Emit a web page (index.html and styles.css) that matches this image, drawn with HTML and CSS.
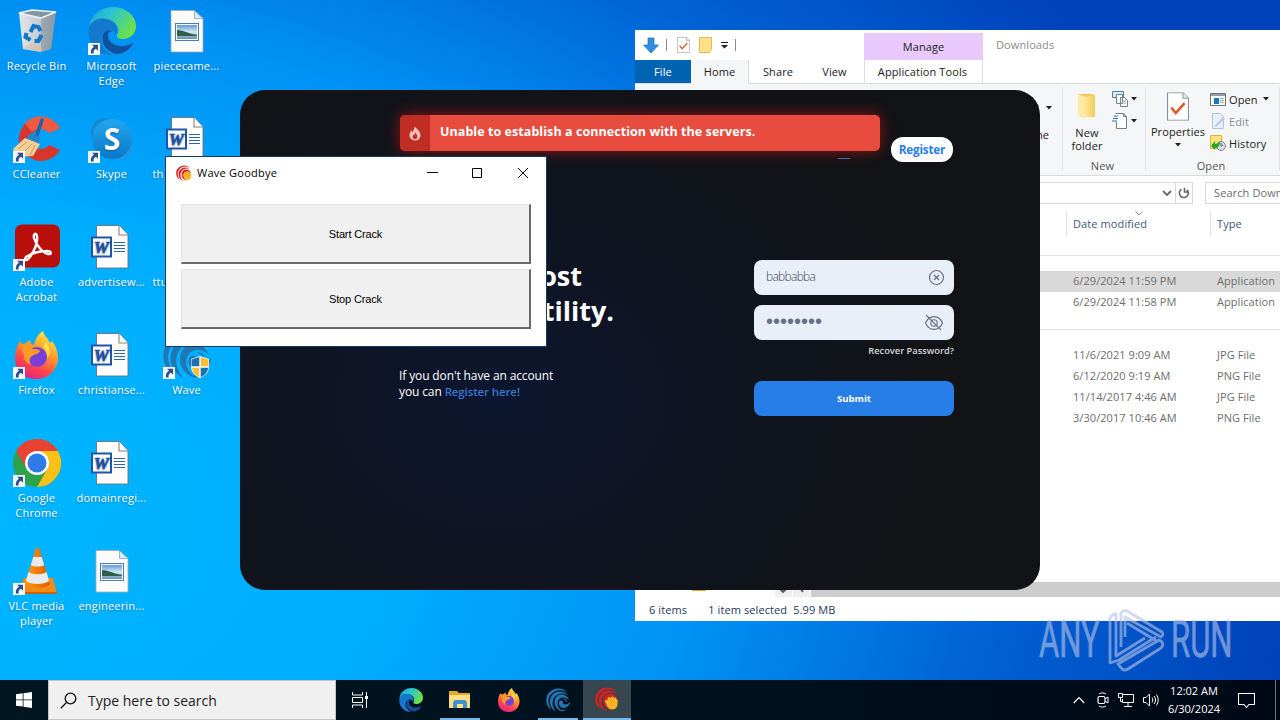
FILE: index.html
```
<!DOCTYPE html>
<html lang="en">
<head>
    <meta charset="UTF-8">
    <meta name="viewport" content="width=device-width, initial-scale=1.0">
    <title>Desktop</title>
    <link rel="stylesheet" href="styles.css">
</head>
<body>
    <!-- Shared icons -->
    <svg class="sprite" width="0" height="0">
        <defs>
            <linearGradient id="edgeGreen" x1="0" y1="0" x2="1" y2=".5"><stop offset="0" stop-color="#1fa3dc"/><stop offset=".45" stop-color="#2bc3d2"/><stop offset="1" stop-color="#6be04a"/></linearGradient>
            <linearGradient id="fire" x1=".8" y1="0" x2=".3" y2="1"><stop offset="0" stop-color="#fff04a"/><stop offset=".4" stop-color="#ff9a2b"/><stop offset=".75" stop-color="#ff4050"/><stop offset="1" stop-color="#e0218a"/></linearGradient>
            <linearGradient id="skype" x1="0" y1="0" x2="0" y2="1"><stop offset="0" stop-color="#22a8ee"/><stop offset="1" stop-color="#0a78c8"/></linearGradient>
            <linearGradient id="cone" x1="0" y1="0" x2="1" y2="0"><stop offset="0" stop-color="#ff9a1e"/><stop offset=".5" stop-color="#f57a00"/><stop offset="1" stop-color="#d95a00"/></linearGradient>
            <linearGradient id="sky" x1="0" y1="0" x2="0" y2="1"><stop offset="0" stop-color="#5b9be0"/><stop offset=".5" stop-color="#d8e8f4"/><stop offset="1" stop-color="#5f8fb0"/></linearGradient>
            <linearGradient id="bin" x1="0" y1="0" x2="1" y2="0"><stop offset="0" stop-color="#e3e8eb"/><stop offset=".55" stop-color="#c4ccd2"/><stop offset="1" stop-color="#8b9aa6"/></linearGradient>
            <linearGradient id="fold" x1="0" y1="0" x2="1" y2="0"><stop offset="0" stop-color="#ffe79b"/><stop offset="1" stop-color="#f5cb58"/></linearGradient>
        </defs>
        <symbol id="i-shortcut" viewBox="0 0 12 12">
            <rect width="12" height="12" fill="#f6f8fb"/>
            <path d="M4 1.800h6v6l-2-2c-2 .8-2.700 2.200-2.400 4.700H3C2.400 7.500 3.600 5 6 3.800z" fill="#2b4f8e"/>
        </symbol>
        <symbol id="i-bin" viewBox="0 0 48 48">
            <path d="M6 6l37-2-5 38-10 3-18-3z" fill="url(#bin)"/>
            <path d="M28 11l15-7-5 38-10 3z" fill="#8796a3" opacity=".6"/>
            <path d="M6 6l13-3 24 2-15 6z" fill="#8494a0" stroke="#edf2f5" stroke-width="1.500"/>
            <path d="M10 41l10-6 9 6-1 4z" fill="#e3b8a0" opacity=".6"/>
            <path d="M18 26l3-6 5 1 2 4M34 25l0 0M29 29l-3 6h-4M18 34l-5-3 1-4" transform="translate(-.5 -1)" fill="none" stroke="#1276c9" stroke-width="4"/>
        </symbol>
        <symbol id="i-edge" viewBox="0 0 48 48">
            <path d="M1 21C2 9 12 0 25 0c13 0 23 9 23 19 0 8-6 13-13 13-5 0-7-2-6-4 3-4 1-12-7-15C12 10 4 14 1 21z" fill="url(#edgeGreen)"/>
            <path d="M1 20C5 11 15 10 22 13c6 3 8 9 6 14-2-5-9-6-13 0-5 8 1 17 9 21C10 48-2 36 1 20z" fill="#1479cc"/>
            <path d="M16 26c-5 9 3 20 14 21 7-1 12-5 15-10 0-1-1-1-2 0-10 5-24 1-23-10 1-2 3-3 5-2-3-3-7-2-9 1z" fill="#124f9d"/>
        </symbol>
        <symbol id="i-image" viewBox="0 0 48 48">
            <path d="M8 3.500h23l9 8V45H8z" fill="#fbfbfb" stroke="#a4a9ae" stroke-width=".8"/>
            <path d="M31.500 3.500v8H40z" fill="#d6eaf7" stroke="#8fa4b3" stroke-width=".8"/>
            <rect x="12.500" y="16.500" width="23" height="17" fill="#fff" stroke="#467fa9"/>
            <rect x="14" y="18" width="20" height="14" fill="url(#sky)"/>
            <path d="M14 23c5 0 10 3 20 5v1H14z" fill="#2f5f46"/>
        </symbol>
        <symbol id="i-word" viewBox="0 0 48 48">
            <path d="M8.500 2.500H31l9 9.500v33H8.500z" fill="#fdfdfd" stroke="#6b6f78" stroke-width=".9"/>
            <path d="M31 2.500V12h9" fill="#fff" stroke="#8d8278" stroke-width="1.100"/>
            <path d="M26 19.500h11M26 22.500h11M26 25.500h11M26 28.500h11" stroke="#2d64ad"/>
            <rect x="4" y="14.500" width="19" height="19" fill="#fff" stroke="#1f55a8" stroke-width="2"/>
            <text x="13.300" y="30" text-anchor="middle" font-family="Liberation Serif, serif" font-size="17" font-weight="700" font-style="italic" fill="#1f55a8" stroke="#1f55a8" stroke-width=".6">W</text>
        </symbol>
        <symbol id="i-ccleaner" viewBox="0 0 48 48">
            <path d="M47 13A22 22 0 1 0 47 35l-11-5a10 10 0 1 1 0-12z" fill="#d9352c"/>
            <path d="M47 13A22 22 0 0 0 12 8l7 9c6-5 13-4 17 1z" fill="#f05a43"/>
            <path d="M28 3l3 1-6 19-4-1z" fill="#1f66a6"/>
            <path d="M17 18l10 4-1 7-13-5z" fill="#2486c7"/>
            <path d="M12 23l15 6-7 12-17 1-3-8z" fill="#f3cf98"/>
            <path d="M5 34l9-7M10 38l9-9M17 40l5-10" stroke="#c99a5c"/>
        </symbol>
        <symbol id="i-skype" viewBox="0 0 48 48">
            <circle cx="17" cy="17" r="14" fill="#1587d2"/><circle cx="31" cy="31" r="14" fill="#1c98e4"/>
            <circle cx="24" cy="24" r="20" fill="url(#skype)"/>
            <text x="24" y="35" text-anchor="middle" font-family="Open Sans, sans-serif" font-size="30" font-weight="700" fill="#fff">S</text>
        </symbol>
        <symbol id="i-acrobat" viewBox="0 0 48 48">
            <rect x="2" y="1.500" width="45" height="43" rx="7" fill="#b80f0a"/>
            <path d="M13 34c-3 3 1 5 4 0 4-6 8-15 7-21-1-4-4-2-3 2 2 7 9 15 14 16 4 1 4-3-1-3-6 0-15 2-21 6z" fill="none" stroke="#fff" stroke-width="2.400" stroke-linejoin="round"/>
        </symbol>
        <symbol id="i-firefox" viewBox="0 0 48 48">
            <path d="M7 10c1 2 2 3 4 3l6-4c0 3 1 4 4 5 1-6 4-11 9-14 1 5 5 7 7 12l2-2c6 8 8 18 4 26-4 8-11 12-20 12C10 48 2 39 2 27 2 19 4 15 7 10z" fill="url(#fire)"/>
            <circle cx="24" cy="26" r="10" fill="#7741d8"/>
            <path d="M6 14c5-2 10 1 14 4 3 0 6 0 7 2-1 3-5 3-8 5-3 2-3 5-1 9-5-2-8-6-7-11z" fill="#ff9a25"/>
            <path d="M30 16c4 4 5 8 4 12 4-5 3-12-1-17z" fill="#ffe04a"/>
        </symbol>
        <symbol id="i-chrome" viewBox="0 0 48 48">
            <circle cx="24" cy="24" r="24" fill="#2da14c"/>
            <path d="M24 12h20.800A24 24 0 0 1 24 48l10.400-18z" fill="#fbc116"/>
            <path d="M3.200 12A24 24 0 0 1 44.800 12H24L13.600 30z" fill="#e94235"/>
            <circle cx="24" cy="24" r="12" fill="#fff"/><circle cx="24" cy="24" r="9.500" fill="#2f7bea"/>
        </symbol>
        <symbol id="i-vlc" viewBox="0 0 48 48">
            <path d="M11 31h29l4 16H5z" fill="#f28a14"/>
            <path d="M5 45h39v2H5z" fill="#cc5f00"/>
            <path d="M23 1h3l11 36c-4 5-21 5-25 0z" fill="url(#cone)"/>
            <path d="M20.300 10h8.400l2.500 8c-3 2-10 2-13.400 0zM15.500 25c4 3 14 3 18 0l2.700 9c-5 4-18.500 4-23.400 0z" fill="#e9eaeb"/>
        </symbol>
        <symbol id="i-wave" viewBox="0 0 48 48">
            <g fill="currentColor">
                <path d="M43 9C31-4 9 0 2 16c-4 11 0 23 9 28C4 33 3 22 9 14 17 3 31 2 43 9z"/>
                <path d="M45 15C35 4 18 5 11 16c-7 11-3 24 9 31-7-9-9-19-4-27 6-10 19-12 29-5z"/>
                <path d="M46 24C42 12 25 9 19 20c-6 12 2 24 14 27-8-6-12-14-9-21 4-9 15-9 22-2z"/>
                <path d="M34 27c-4-5-10-1-8 6 2 8 13 9 18 3 3-3 4-6 4-9-3 5-8 7-12 5-2-1-3-3-2-5z"/>
                <path d="M33 21c6 0 9 3 9 8-2-4-5-6-9-8zM24 42c6 4 12 3 18-2-4 7-12 9-18 2z"/>
            </g>
        </symbol>
        <symbol id="i-shield" viewBox="0 0 22 24">
            <path d="M11 1l9 3v7c0 6-4 10-9 12C6 21 2 17 2 11V4z" fill="#fff"/>
            <path d="M10.300 2v9.300H2.500V4.500zM11.700 12.700h7.600c-1 5-4 8-7.600 9.500z" fill="#1b6fb5"/>
            <path d="M11.700 2l7.800 2.500v6.800h-7.800zM2.700 12.700h7.600v9.500C6 20.500 3.500 17 2.700 12.700z" fill="#fcbf33"/>
        </symbol>
        <symbol id="i-goodbye" viewBox="0 0 48 48">
            <g fill="#d9201e">
                <path d="M43 9C31-4 9 0 2 16c-4 11 0 23 9 28C4 33 3 22 9 14 17 3 31 2 43 9z"/>
                <path d="M45 15C35 4 18 5 11 16c-7 11-3 24 9 31-7-9-9-19-4-27 6-10 19-12 29-5z"/>
                <path d="M46 26C42 12 25 9 19 20c-6 12 2 24 14 27-8-6-12-14-9-21 4-9 15-9 22 0z"/>
                <path d="M7 30c3 9 9 15 19 17-9 1-17-5-19-17z"/>
            </g>
            <path d="M20 29c0-3 2-4 4-2l2-6c2-2 4 0 4 1l4-3c2 0 3 1 4 3 3-2 5 0 5 3 3 0 3 3 2 6 1 8-3 14-10 14-6 0-9-3-12-9z" fill="#f9b425"/>
            <path d="M26 22l7 9M31 22l6 8" stroke="#df8a16"/>
        </symbol>
        <symbol id="i-caret" viewBox="0 0 6 4"><path d="M0 0h6L3 3.500z" fill="#222"/></symbol>
        <symbol id="i-page" viewBox="0 0 20 26">
            <path d="M.5.5h14l5 5v20H.5z" fill="#fff" stroke="#8a8f96"/><path d="M14.500.5v5h5" fill="#e8e8e8" stroke="#9a9a9a"/>
            <path d="M4 14l4 5 8-9" fill="none" stroke="#e0592b" stroke-width="2.300"/>
        </symbol>
    </svg>

    <div class="desktop">
        <!-- Desktop icons -->
        <div class="icons">
            <div class="shortcut"><div class="pic"><svg><use href="#i-bin"/></svg></div><span>Recycle Bin</span></div>
            <div class="shortcut"><div class="pic"><svg><use href="#i-ccleaner"/></svg><svg class="arrow"><use href="#i-shortcut"/></svg></div><span>CCleaner</span></div>
            <div class="shortcut"><div class="pic"><svg><use href="#i-acrobat"/></svg><svg class="arrow"><use href="#i-shortcut"/></svg></div><span>Adobe<br>Acrobat</span></div>
            <div class="shortcut"><div class="pic"><svg><use href="#i-firefox"/></svg><svg class="arrow"><use href="#i-shortcut"/></svg></div><span>Firefox</span></div>
            <div class="shortcut"><div class="pic"><svg><use href="#i-chrome"/></svg><svg class="arrow"><use href="#i-shortcut"/></svg></div><span>Google<br>Chrome</span></div>
            <div class="shortcut"><div class="pic"><svg><use href="#i-vlc"/></svg><svg class="arrow"><use href="#i-shortcut"/></svg></div><span>VLC media<br>player</span></div>

            <div class="shortcut"><div class="pic"><svg><use href="#i-edge"/></svg><svg class="arrow"><use href="#i-shortcut"/></svg></div><span>Microsoft<br>Edge</span></div>
            <div class="shortcut"><div class="pic"><svg><use href="#i-skype"/></svg><svg class="arrow"><use href="#i-shortcut"/></svg></div><span>Skype</span></div>
            <div class="shortcut"><div class="pic"><svg><use href="#i-word"/></svg></div><span>advertisew...</span></div>
            <div class="shortcut"><div class="pic"><svg><use href="#i-word"/></svg></div><span>christianse...</span></div>
            <div class="shortcut"><div class="pic"><svg><use href="#i-word"/></svg></div><span>domainregi...</span></div>
            <div class="shortcut"><div class="pic"><svg><use href="#i-image"/></svg></div><span>engineerin...</span></div>

            <div class="shortcut"><div class="pic"><svg><use href="#i-image"/></svg></div><span>piececame...</span></div>
            <div class="shortcut covered"><div class="pic"><svg><use href="#i-word"/></svg></div><span>th</span></div>
            <div class="shortcut covered"><div class="pic"><svg><use href="#i-word"/></svg></div><span>ttu</span></div>
            <div class="shortcut"><div class="pic wave-pic"><svg><use href="#i-wave"/></svg><svg class="arrow"><use href="#i-shortcut"/></svg><svg class="shield"><use href="#i-shield"/></svg></div><span>Wave</span></div>
        </div>

        <!-- File Explorer -->
        <div class="explorer">
            <div class="ex-top">
                <div class="quick">
                    <svg width="16" height="17" viewBox="0 0 16 17"><path d="M5 1h6v7h4.500L8 16 .5 8H5z" fill="#2f8ee0" stroke="#1b6fc0" stroke-width=".7"/></svg>
                    <i class="bar"></i>
                    <svg width="13" height="16" viewBox="0 0 20 26" preserveAspectRatio="none"><use href="#i-page"/></svg>
                    <svg width="13" height="16" viewBox="0 0 13 16"><path d="M.5.5h12v12l-2 3H.5z" fill="#ffe08a" stroke="#e5bd4f"/></svg>
                    <svg width="7" height="7" viewBox="0 0 7 7"><path d="M0 .5h7" stroke="#222"/><path d="M0 3h7L3.500 6.500z" fill="#222"/></svg>
                    <i class="bar"></i>
                </div>
                <div class="manage">Manage</div>
                <div class="ex-title">Downloads</div>
            </div>
            <div class="tabs">
                <div class="tab file">File</div>
                <div class="tab home">Home</div>
                <div class="tab share">Share</div>
                <div class="tab view">View</div>
                <div class="tab tools">Application Tools</div>
            </div>
            <div class="ribbon">
                <div class="group organize">
                    <div>e <svg class="caret"><use href="#i-caret"/></svg></div>
                    <div>ne</div>
                </div>
                <div class="group new">
                    <div class="cols">
                        <div class="big">
                            <svg width="20" height="28" viewBox="0 0 20 28"><path d="M1 2h13l4 1v22H3z" fill="#f1c75d"/><path d="M1 2l7 3v22l-7-4z" fill="#ffe9a6"/><path d="M8 5l10-2v22H8z" fill="url(#fold)"/></svg>
                            <span>New<br>folder</span>
                        </div>
                        <div class="small">
                            <div><svg width="16" height="16" viewBox="0 0 16 16"><path d="M.5.5h11v6H.5z" fill="#d9ebf8" stroke="#4a7fa8"/><path d="M4.500 3.500h6v9h-6zM8.500 6.500h4l3 3v6h-7z" fill="#fff" stroke="#73828f"/><path d="M10 10h4M10 12h4" stroke="#9aa7b2"/></svg><svg class="caret"><use href="#i-caret"/></svg></div>
                            <div><svg width="16" height="16" viewBox="0 0 16 16"><path d="M3.500.5h8l3 3v12h-10V9" fill="#fff" stroke="#6f7f8c"/><path d="M11.500.5v3h3" fill="none" stroke="#6f7f8c"/><path d="M2 3h4M1 5.500h5M0 8h5" stroke="#1d78bd"/></svg><svg class="caret"><use href="#i-caret"/></svg></div>
                        </div>
                    </div>
                    <div class="group-name">New</div>
                </div>
                <div class="group open">
                    <div class="cols">
                        <div class="big props">
                            <svg width="22" height="29" viewBox="0 0 20 26"><use href="#i-page"/></svg>
                            <span>Properties</span>
                            <svg class="caret"><use href="#i-caret"/></svg>
                        </div>
                        <div class="small">
                            <div><svg width="16" height="13" viewBox="0 0 16 13"><path d="M.5.5h15v12H.5z" fill="#fff" stroke="#68737d"/><path d="M1 1h14v2H1z" fill="#929ca6"/><path d="M4 5h5v6H4z" fill="#1677c7"/><path d="M10 5.500h4M10 7.500h4M10 9.500h4" stroke="#9aa"/></svg>Open<svg class="caret"><use href="#i-caret"/></svg></div>
                            <div class="off"><svg width="16" height="16" viewBox="0 0 16 16"><path d="M2.500.5h8l3 3v12h-11z" fill="#e9f0f9" stroke="#b5c3d6"/><path d="M4 13l9-9 2 2-9 8z" fill="#b9cbe4"/></svg>Edit</div>
                            <div><svg width="16" height="16" viewBox="0 0 16 16"><path d="M.5.5h11v13H.5z" fill="#ffe37c" stroke="#dfb23b"/><circle cx="11" cy="11" r="4.500" fill="#d8dde2" stroke="#7d8790"/><path d="M11 8v3l2-1" fill="none" stroke="#555"/><path d="M1 11l4-5v3c3 0 4-1 5-3 0 4-1 7-5 7v2z" fill="#24a52c"/></svg>History</div>
                        </div>
                    </div>
                    <div class="group-name">Open</div>
                </div>
            </div>
            <div class="address">
                <div class="path">
                    <svg width="10" height="7" viewBox="0 0 10 7"><path d="M1 1l4 4 4-4" fill="none" stroke="#666" stroke-width="1.800"/></svg>
                </div>
                <div class="refresh"><svg width="12" height="12" viewBox="0 0 12 12"><path d="M3.500 2.200A4.500 4.500 0 1 0 9 2.800M6.500 .8V5h4" fill="none" stroke="#666" stroke-width="1.600"/></svg></div>
                <div class="search">Search Downloads</div>
            </div>
            <div class="list-head">
                <div class="date">Date modified<svg class="sort" viewBox="0 0 8 5"><path d="M.5.5L4 4 7.500.5" fill="none" stroke="#8a8a8a"/></svg></div>
                <div class="type">Type</div>
            </div>
            <div class="files">
                <div class="file-row selected"><span>6/29/2024 11:59 PM</span><span>Application</span></div>
                <div class="file-row"><span>6/29/2024 11:58 PM</span><span>Application</span></div>
                <div class="split"></div>
                <div class="file-row"><span>11/6/2021 9:09 AM</span><span>JPG File</span></div>
                <div class="file-row"><span>6/12/2020 9:19 AM</span><span>PNG File</span></div>
                <div class="file-row"><span>11/14/2017 4:46 AM</span><span>JPG File</span></div>
                <div class="file-row"><span>3/30/2017 10:46 AM</span><span>PNG File</span></div>
            </div>
            <div class="scroll">
                <i class="folder-edge"></i>
                <div class="scroll-btn"><svg width="8" height="6" viewBox="0 0 8 6"><path d="M1 1l3 3 3-3" fill="none" stroke="#555" stroke-width="1.800"/></svg></div>
                <div class="scroll-btn"><svg width="8" height="6" viewBox="0 0 8 6"><path d="M3 0l3 4" fill="none" stroke="#555" stroke-width="1.800"/></svg></div>
                <div class="thumb"></div>
            </div>
            <div class="status"><span>6 items</span><span>1 item selected</span><span>5.99 MB</span></div>
        </div>

        <!-- Wave login -->
        <div class="wave">
            <div class="nav"><i class="login"></i><a class="register">Register</a></div>
            <div class="wave-main">
                <div class="intro">
                    <h1><span class="first">most</span><span>utility.</span></h1>
                    <p>If you don't have an account<br>you can <a>Register here!</a></p>
                </div>
                <div class="form">
                    <div class="field">
                        <span>babbabba</span>
                        <svg width="17" height="17" viewBox="0 0 17 17"><circle cx="8.500" cy="8.500" r="7" fill="none" stroke="#667084" stroke-width="1.200"/><path d="M6 6l5 5M11 6l-5 5" stroke="#667084" stroke-width="1.200"/></svg>
                    </div>
                    <div class="field">
                        <span class="dots">••••••••</span>
                        <svg class="eye" width="20" height="18" viewBox="0 0 20 18"><g fill="none" stroke="#667084" stroke-width="1.100"><path d="M1.500 9C5 .5 15 .5 18.500 9 15 17.500 5 17.500 1.500 9z"/><circle cx="10" cy="9" r="3.200"/><path d="M2 1l15 15"/></g></svg>
                    </div>
                    <a class="recover">Recover Password?</a>
                    <div class="submit">Submit</div>
                </div>
            </div>
            <div class="toast">
                <div class="toast-icon"><svg width="12" height="15" viewBox="0 0 13 15"><path d="M6 0c3 3 6 5 6.500 9 0 4-3 6-6 6s-6-2-6-5.500C.5 7 2 5 3 4c0 1 .5 2 1 2C5 4 6 2 6 0z" fill="#f6bfb6"/><path d="M6.500 6.500C8 8 9 9 9 11c0 1.500-1 2.500-2.500 2.500S4 12.500 4 11c0-1 .5-2 1-2.500l1 1z" fill="#bf2d24"/></svg></div>
                <div class="toast-text">Unable to establish a connection with the servers.</div>
            </div>
        </div>

        <!-- Wave Goodbye -->
        <div class="goodbye">
            <div class="gb-title">
                <svg class="gb-icon"><use href="#i-goodbye"/></svg>
                <span>Wave Goodbye</span>
                <svg class="controls" width="104" height="12" viewBox="0 0 104 12"><path d="M1 5.500h11M46.500 1.500h9v9h-9zM92 1l10 10M102 1L92 11" fill="none" stroke="#000"/></svg>
            </div>
            <div class="gb-body">
                <div class="gb-btn">Start Crack</div>
                <div class="gb-btn">Stop Crack</div>
            </div>
        </div>

        <!-- Watermark -->
        <div class="anyrun">
            <span>ANY</span>
            <svg width="58" height="64" viewBox="0 0 58 64"><g fill="none" stroke-width="2.800" stroke-linejoin="round"><path d="M2 9q3-3 6-3v42l29-18M2 9v46l9-3 37-23M13 39V5q3-4 6-2l35 21q2 3-1 5L17 9v20M19 15l31 19M10 56l4 5q3 2 6 0l33-21q3-3 1-6l-3-2z"/></g></svg>
            <span>RUN</span>
        </div>

        <!-- Taskbar -->
        <div class="taskbar">
            <div class="start"><svg width="16" height="16" viewBox="0 0 16 16"><path d="M0 2.200l6.700-.9v6.200H0zM7.500 1.200L16 0v7.500H7.500zM0 8.300h6.700v6.300L0 13.700zM7.500 8.300H16V16l-8.500-1.200z" fill="#fff"/></svg></div>
            <div class="search-box">
                <svg width="17" height="17" viewBox="0 0 17 17"><circle cx="10.500" cy="6.500" r="5.300" fill="none" stroke="#111" stroke-width="1.300"/><path d="M6.500 10.500L.8 16.200" stroke="#111" stroke-width="1.300"/></svg>
                <span>Type here to search</span>
            </div>
            <div class="task view-btn"><svg width="16" height="16" viewBox="0 0 16 16"><path d="M.5 0v3h10V0M.5 16v-3h10v3M.5 5.500h10v5H.5zM14.500 0v16" fill="none" stroke="#fff"/><path d="M13 4h3v3h-3z" fill="#fff"/></svg></div>
            <div class="task"><svg class="ic"><use href="#i-edge"/></svg></div>
            <div class="task open-task"><svg width="22" height="20" viewBox="0 0 22 20"><path d="M0 1h8l2 2h11v15H0z" fill="#e8a62b"/><path d="M0 5h21v13H0z" fill="#ffdf83"/><path d="M4 18v-6l2-2h10l2 2v6h-4v-4H8v4z" fill="#3f91d2"/></svg></div>
            <div class="task"><svg class="ic"><use href="#i-firefox"/></svg></div>
            <div class="task open-task wave-pic"><svg class="ic"><use href="#i-wave"/></svg></div>
            <div class="task active"><svg class="ic"><use href="#i-goodbye"/></svg></div>
            <div class="tray">
                <svg width="12" height="8" viewBox="0 0 12 8"><path d="M.8 7L6 1.500 11.200 7" fill="none" stroke="#fff" stroke-width="1.200"/></svg>
                <svg width="12" height="16" viewBox="0 0 12 16"><rect x="1" y="4.500" width="7" height="7" rx="1.500" fill="none" stroke="#fff" stroke-width="1.200"/><path d="M8 7l3-2v6L8 9M2 2c2-1.500 5-1.500 7 0M2 14c2 1.500 5 1.500 7 0" fill="none" stroke="#fff"/></svg>
                <svg width="16" height="14" viewBox="0 0 16 14"><path d="M5 1.500h10.500v8H4.500V6M10 9.500v4M6 13.500h8M.5.500h4v4h-4zM2.500 4.500v4h2" fill="none" stroke="#fff"/></svg>
                <svg width="16" height="14" viewBox="0 0 16 14"><path d="M.5 4.500h2.500l3.500-3.500v12L3 9.500H.5zM9 4.500c1 1.500 1 3.500 0 5M11 3c2 2.500 2 5.500 0 8M13.300 1.500c2.500 3 2.500 8 0 11" fill="none" stroke="#fff"/></svg>
            </div>
            <div class="clock">12:02 AM<br>6/30/2024</div>
            <div class="action"><svg width="17" height="17" viewBox="0 0 17 17"><path d="M.5 1.500h16v11h-5.500L8.500 15.500 6 12.500H.5z" fill="none" stroke="#fff" stroke-width="1.100"/></svg></div>
        </div>
    </div>
</body>
</html>
```
FILE: styles.css
```
* {
    box-sizing: border-box;
}
body {
    margin: 0;
    overflow: hidden;
    font-family: "Open Sans", "Noto Sans", sans-serif;
    font-size: 11px;
    color: #222;
}
svg {
    display: block;
    flex: none;
}
.sprite {
    position: absolute;
}
.desktop {
    position: relative;
    width: 1280px;
    height: 720px;
    overflow: hidden;
    background: radial-gradient(ellipse 1330px 900px at -40px 520px, #00b6ff 0%, #00aeff 32%, #0092f4 56%, #0062d4 78%, #0042ba 100%);
}

/* Desktop icons */
.icons {
    display: grid;
    grid-auto-flow: column;
    grid-template-rows: repeat(6, 108px);
    grid-template-columns: repeat(3, 75px);
    width: 225px;
    padding-top: 7px;
    margin-left: -1px;
}
.shortcut {
    display: flex;
    flex-direction: column;
    align-items: center;
    gap: 3px;
    color: #fff;
    line-height: 15px;
    text-align: center;
    letter-spacing: .2px;
    white-space: nowrap;
    text-shadow: 0 1px 2px rgba(0, 30, 70, .4);
}
.covered span {
    width: 68px;
    text-align: left;
}
.pic {
    position: relative;
    width: 48px;
    height: 48px;
}
.pic svg {
    width: 48px;
    height: 48px;
}
.pic .arrow {
    position: absolute;
    left: 0;
    bottom: 0;
    width: 12px;
    height: 12px;
}
.pic .shield {
    position: absolute;
    right: 0;
    bottom: 0;
    width: 22px;
    height: 24px;
}
.wave-pic {
    color: #2376b4;
}

/* File Explorer */
.explorer {
    position: absolute;
    left: 635px;
    top: 30px;
    width: 680px;
    height: 591px;
    display: flex;
    flex-direction: column;
    background: #fff;
    letter-spacing: .1px;
    white-space: nowrap;
}
.ex-top {
    display: flex;
    height: 30px;
}
.quick {
    display: flex;
    align-items: center;
    width: 229px;
    padding-left: 8px;
}
.bar {
    width: 1px;
    height: 12px;
    background: #8a8a8a;
    margin: 0 10px 0 7px;
}
.quick svg + svg {
    margin-left: 9px;
}
.manage {
    width: 119px;
    margin-top: 3px;
    padding-top: 6px;
    background: #e9c9fd;
    text-align: center;
    line-height: 16px;
}
.ex-title {
    padding: 7px 13px;
    line-height: 16px;
    color: #8b8b8b;
}
.tabs {
    display: flex;
    height: 24px;
    line-height: 24px;
    text-align: center;
    border-bottom: 1px solid #dadbdc;
}
.tab.file {
    width: 56px;
    background: #0063b1;
    color: #fff;
}
.tab.home {
    width: 58px;
    height: 24px;
    background: #f5f6f7;
    border-right: 1px solid #dadbdc;
}
.tab.share {
    width: 58px;
}
.tab.view {
    width: 57px;
    padding-right: 2px;
}
.tab.tools {
    width: 119px;
    border-left: 1px solid #e0dce4;
    border-right: 1px solid #e0dce4;
    padding-right: 2px;
}
.ribbon {
    display: flex;
    height: 92px;
    background: #f5f6f7;
    border-bottom: 1px solid #dadbdc;
}
.group {
    margin: 3px 0 5px;
    border-right: 1px solid #dfe1e3;
}
.caret {
    display: inline-block;
    width: 6px;
    height: 4px;
    margin-left: 4px;
}
.organize {
    width: 428px;
    padding: 11px 10px 0 0;
    text-align: right;
    line-height: 15px;
}
.organize div + div {
    margin-top: 14px;
    padding-right: 3px;
}
.new {
    width: 83px;
}
.open {
    width: 134px;
}
.cols {
    display: flex;
    height: 71px;
}
.new .cols {
    padding-left: 8px;
}
.open .cols {
    padding-left: 6px;
}
.big {
    display: flex;
    flex-direction: column;
    align-items: center;
    padding-top: 5px;
    width: 32px;
    text-align: center;
    line-height: 13px;
}
.big svg + span {
    margin-top: 6px;
}
.big.props {
    width: 52px;
}
.props svg + span {
    margin-top: 4px;
}
.props .caret {
    margin: 5px 0 0;
}
.small {
    display: flex;
    flex-direction: column;
    gap: 6px;
    margin-left: 9px;
    padding-top: 4px;
}
.small div {
    display: flex;
    align-items: center;
    height: 16px;
    gap: 3px;
}
.new .small .caret {
    margin-left: 0;
}
.open .small {
    margin-left: 6px;
    padding-top: 4px;
}
.open .small .caret {
    margin-left: 2px;
}
.off {
    color: #8a8f96;
}
.group-name {
    text-align: center;
    line-height: 16px;
    color: #555;
}
.new .group-name,
.open .group-name {
    padding-right: 3px;
}
.address {
    display: flex;
    height: 35px;
    padding: 6px 0 7px;
}
.path {
    flex: none;
    width: 541px;
    border: 1px solid #d9d9d9;
    display: flex;
    align-items: center;
    justify-content: flex-end;
    padding-right: 3px;
}
.refresh {
    flex: none;
    width: 17px;
    border: 1px solid #d9d9d9;
    border-left: 0;
    display: flex;
    align-items: center;
    justify-content: center;
}
.search {
    flex: 1;
    margin-left: 12px;
    padding-left: 8px;
    border: 1px solid #d9d9d9;
    line-height: 20px;
    color: #6d6d6d;
}
.list-head {
    display: flex;
    height: 45px;
    padding: 0 0 19px 431px;
    border-bottom: 1px solid #e5e5e5;
    color: #44597a;
    line-height: 26px;
}
.date {
    position: relative;
    width: 144px;
    padding-left: 6px;
    border-left: 1px solid #e5e5e5;
}
.sort {
    position: absolute;
    left: 68px;
    top: 0;
    width: 8px;
    height: 5px;
}
.type {
    padding-left: 6px;
    border-left: 1px solid #e5e5e5;
}
.files {
    flex: 1;
    padding-top: 15px;
    color: #6d6d6d;
}
.file-row {
    display: flex;
    height: 21px;
    padding-left: 438px;
    line-height: 20px;
    letter-spacing: .06px;
}
.file-row span:first-child {
    width: 144px;
}
.selected {
    background: #d9d9d9;
}
.split {
    margin: 16px 0 15px;
    border-top: 1px solid #e8e8e8;
}
.scroll {
    display: flex;
    height: 15px;
}
.folder-edge {
    width: 14px;
    height: 9px;
    margin: 0 69px 0 57px;
    background: #e2a21d;
}
.scroll-btn {
    width: 17px;
    margin-right: 1px;
    padding: 6px 0 0 4px;
    background: #f0f0f0;
}
.thumb {
    flex: 1;
    background: #cdcdcd;
}
.status {
    display: flex;
    height: 24px;
    padding-left: 14px;
    line-height: 25px;
    color: #1e395b;
}
.status span:nth-child(2) {
    margin: 0 6px 0 21px;
}

/* Wave login window */
.wave {
    position: absolute;
    left: 240px;
    top: 90px;
    width: 800px;
    height: 500px;
    border-radius: 25px;
    overflow: hidden;
    background: radial-gradient(ellipse 420px 330px at 260px 310px, #0d1630 0%, #0f1421 50%, #111317 100%);
    color: #fff;
    white-space: nowrap;
}
.nav {
    display: flex;
    justify-content: flex-end;
    align-items: center;
    height: 25px;
    margin: 47px 87px 0 0;
    font-weight: 600;
    font-size: 12px;
}
.login {
    width: 12px;
    height: 18px;
    margin-right: 41px;
    border-bottom: 1px solid #3f6fb0;
}
.register {
    width: 62px;
    height: 25px;
    border-radius: 12px;
    background: #fff;
    color: #277ee6;
    font-size: 11.700px;
    font-weight: 700;
    line-height: 24px;
    text-align: center;
    letter-spacing: -.2px;
}
.wave-main {
    display: flex;
    padding: 97px 86px 0 159px;
    justify-content: space-between;
}
.intro h1 {
    width: 215px;
    margin: 0;
    font-size: 27px;
    line-height: 34.500px;
    text-align: right;
}
.intro h1 span {
    display: block;
}
.intro .first {
    padding-right: 32px;
}
.intro p {
    margin: 40px 0 0;
    font-size: 12px;
    line-height: 16px;
    letter-spacing: -.12px;
}
.intro p a {
    color: #3478d0;
    font-size: 11.500px;
    font-weight: 600;
}
.form {
    width: 200px;
    padding-top: 1px;
    display: flex;
    flex-direction: column;
}
.field {
    display: flex;
    justify-content: space-between;
    align-items: center;
    height: 35px;
    margin-bottom: 10px;
    padding: 0 9px 0 12px;
    border-radius: 8px;
    background: #e9eff9;
    color: #3f4550;
    font-size: 12px;
    font-weight: 300;
    letter-spacing: -.7px;
}
.field span {
    padding-bottom: 3px;
}
.field .dots {
    padding-bottom: 2px;
    font-family: "Liberation Sans", Arial, sans-serif;
    font-size: 20px;
    font-weight: 400;
    letter-spacing: 0;
    color: #667084;
}
.field .eye {
    margin-right: 1px;
}
.recover {
    margin-top: -6px;
    font-size: 9.300px;
    line-height: 14px;
    color: #d5d8de;
    font-weight: 600;
    text-align: right;
}
.submit {
    height: 35px;
    margin-top: 23px;
    border-radius: 8px;
    background: #277ee6;
    font-size: 9.500px;
    font-weight: 700;
    line-height: 35px;
    text-align: center;
}
.toast {
    position: absolute;
    left: 160px;
    top: 25px;
    width: 480px;
    height: 36px;
    display: flex;
    border-radius: 5px;
    overflow: hidden;
    background: #e84c3f;
    box-shadow: 0 0 15px rgba(225, 25, 20, .6);
}
.toast-icon {
    display: flex;
    align-items: center;
    justify-content: center;
    width: 30px;
    background: #bf2d24;
    padding-top: 1px;
}
.toast-text {
    padding-left: 10px;
    font-size: 12.500px;
    font-weight: 700;
    line-height: 33px;
    letter-spacing: .06px;
}

/* Wave Goodbye window */
.goodbye {
    position: absolute;
    left: 165px;
    top: 156px;
    width: 382px;
    height: 191px;
    border: 1px solid #123a5c;
    background: #fff;
    color: #000;
    white-space: nowrap;
}
.gb-title {
    display: flex;
    align-items: center;
    height: 31px;
    padding: 0 16px 0 10px;
    letter-spacing: .25px;
}
.gb-icon {
    width: 16px;
    height: 16px;
    margin-right: 5px;
}
.controls {
    margin-left: auto;
}
.gb-body {
    display: flex;
    flex-direction: column;
    gap: 5px;
    padding: 16px 15px;
}
.gb-btn {
    height: 60px;
    border: 1px solid #e3e3e3;
    border-right: 2px solid #696969;
    border-bottom: 2px solid #696969;
    background: #f0f0f0;
    font-family: "Liberation Sans", Arial, sans-serif;
    line-height: 58px;
    text-align: center;
    letter-spacing: -.15px;
}

/* Watermark */
.anyrun {
    position: absolute;
    left: 1039px;
    top: 608px;
    display: flex;
    width: 191px;
    height: 64px;
    gap: 5px;
    opacity: .62;
    color: #b3c2e8;
    font-family: Roboto, sans-serif;
    font-size: 51px;
    line-height: 64px;
    -webkit-text-stroke: .7px #b3c2e8;
}
.anyrun span {
    width: 64px;
    transform: scaleX(.61);
    transform-origin: 0 0;
}
.anyrun svg {
    stroke: #b3c2e8;
}

/* Taskbar */
.taskbar {
    position: absolute;
    left: 0;
    bottom: 0;
    width: 1280px;
    height: 40px;
    display: flex;
    background: linear-gradient(90deg, #001621, #00101d 60%, #000815);
    color: #fff;
}
.start {
    display: flex;
    align-items: center;
    justify-content: center;
    width: 48px;
}
.search-box {
    display: flex;
    align-items: center;
    gap: 11px;
    width: 288px;
    padding-left: 11px;
    border: 1px solid #c4c4c4;
    background: #f0f0f0;
    color: #222;
    font-size: 14px;
}
.task {
    display: flex;
    align-items: center;
    justify-content: center;
    width: 48px;
    margin-right: 1px;
}
.view-btn {
    margin-right: 3px;
}
.ic {
    width: 24px;
    height: 24px;
}
.open-task {
    background: linear-gradient(#76b9ed, #76b9ed) center bottom / 40px 2px no-repeat;
}
.active {
    background: #38464f;
    border-bottom: 2px solid #76b9ed;
}
.tray {
    display: flex;
    align-items: center;
    gap: 9px;
    margin-left: auto;
}
.tray svg:nth-child(2) {
    margin-left: 3px;
}
.clock {
    width: 70px;
    padding-top: 2px;
    line-height: 18px;
    text-align: center;
}
.action {
    display: flex;
    align-items: center;
    justify-content: center;
    width: 47px;
    height: 40px;
    margin-right: 4px;
    border-right: 1px solid #6a747d;
    padding-right: 11px;
}
```
